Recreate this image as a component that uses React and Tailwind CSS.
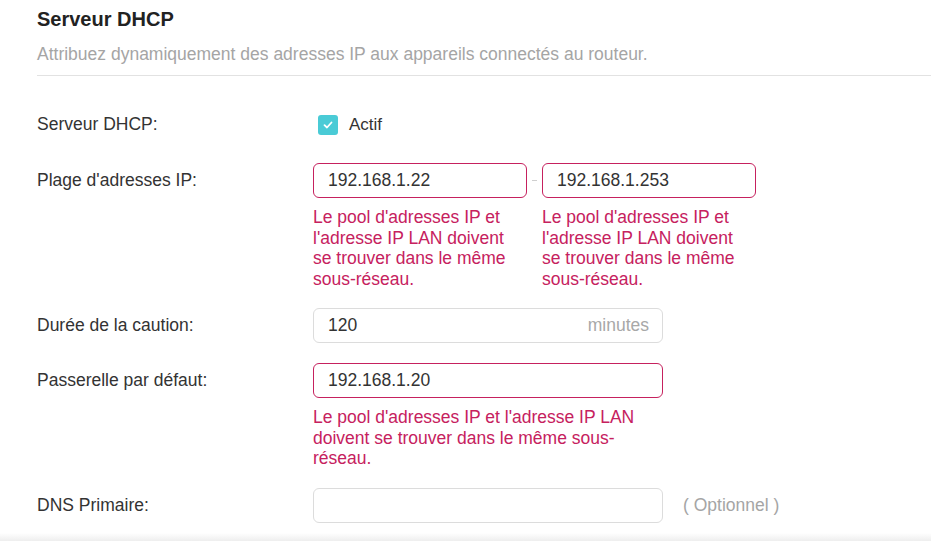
import React from 'react';

const ErrorMsg = () => (
  <p className="mt-[9px] text-[17.5px] leading-[20.5px] text-[#c6215e]">
    Le pool d'adresses IP et l'adresse IP LAN doivent se trouver dans le même sous-réseau.
  </p>
);

const Field = ({ value, error, suffix, className = 'w-[350px]' }) => (
  <div
    className={`flex h-[35px] items-center rounded-[6px] border bg-white pl-[14px] pr-[13px] ${
      error ? 'border-[#c6215e]' : 'border-[#dcdcdc]'
    } ${className}`}
  >
    <span className="flex-1 text-[17.5px] text-[#333]">{value}</span>
    {suffix && <span className="text-[17.5px] text-[#a8a8a8]">{suffix}</span>}
  </div>
);

const Label = ({ children }) => (
  <div className="flex h-[35px] w-[276px] shrink-0 items-center text-[17.5px] text-[#333]">{children}</div>
);

export default function App() {
  return (
    <div className="flex h-[541px] flex-col overflow-hidden bg-white font-['Liberation_Sans',Arial,sans-serif]">
      <div className="pl-[37px]">
        <h1 className="pt-[6px] text-[20px] font-bold leading-[26px] text-[#222]">Serveur DHCP</h1>
        <p className="mt-[10px] text-[17.5px] leading-[24px] text-[#a5a5a5]">
          Attribuez dynamiquement des adresses IP aux appareils connectés au routeur.
        </p>
        <div className="mt-[9px] h-px bg-[#e2e2e2]" />

        <div className="mt-[31px] flex">
          <Label>Serveur DHCP:</Label>
          <div className="flex items-center gap-[11px] pl-[5px]">
            <span className="flex h-[20px] w-[20px] items-center justify-center rounded-[3px] bg-[#4acbd6]">
              <svg width="12" height="12" viewBox="0 0 12 12" fill="none">
                <path d="M2.5 6.2 5 8.5 9.5 3.5" stroke="white" strokeWidth="1.8" strokeLinecap="round" strokeLinejoin="round" />
              </svg>
            </span>
            <span className="text-[17px] text-[#333]">Actif</span>
          </div>
        </div>

        <div className="mt-[21px] flex">
          <Label>Plage d'adresses IP:</Label>
          <div className="flex items-start">
            <div className="w-[214px]">
              <Field value="192.168.1.22" error className="w-[214px]" />
              <ErrorMsg />
            </div>
            <div className="flex h-[35px] w-[15px] items-center justify-center">
              <span className="h-px w-[5px] bg-[#cfcfcf]" />
            </div>
            <div className="w-[214px]">
              <Field value="192.168.1.253" error className="w-[214px]" />
              <ErrorMsg />
            </div>
          </div>
        </div>

        <div className="mt-[19px] flex">
          <Label>Durée de la caution:</Label>
          <Field value="120" suffix="minutes" />
        </div>

        <div className="mt-[20px] flex">
          <Label>Passerelle par défaut:</Label>
          <div className="w-[350px]">
            <Field value="192.168.1.20" error />
            <ErrorMsg />
          </div>
        </div>

        <div className="mt-[19px] flex">
          <Label>DNS Primaire:</Label>
          <Field value="" />
          <div className="flex h-[35px] items-center pl-[20px] text-[17.5px] text-[#a5a5a5]">( Optionnel )</div>
        </div>
      </div>
      <div className="mt-auto h-[8px] bg-gradient-to-b from-white to-[#eeeeee]" />
    </div>
  );
}
